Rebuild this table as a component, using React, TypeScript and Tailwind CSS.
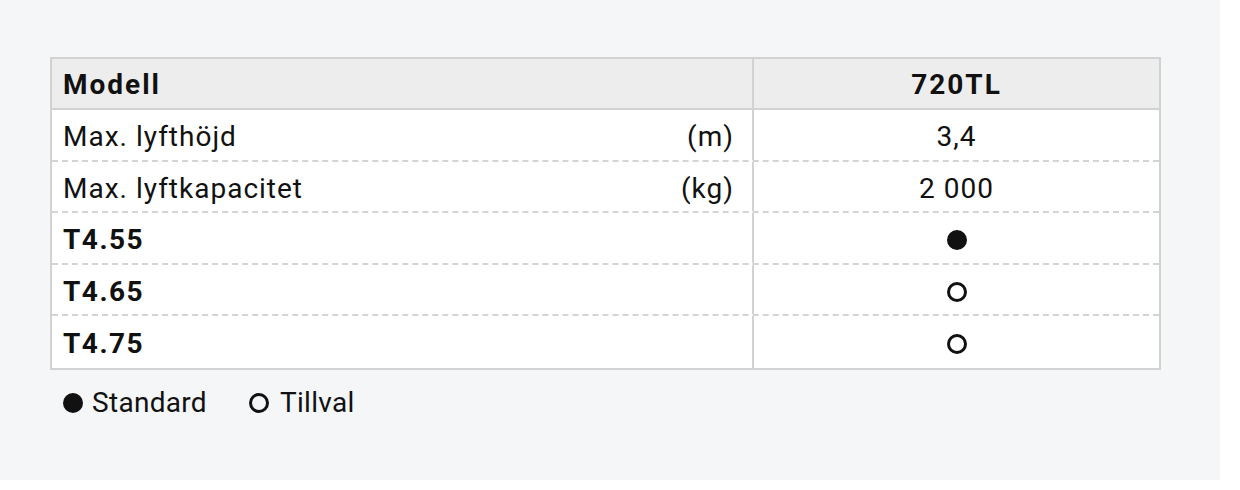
const rows = [
  { label: "Max. lyfthöjd", unit: "(m)", value: "3,4" },
  { label: "Max. lyftkapacitet", unit: "(kg)", value: "2 000" },
  { label: "T4.55", bold: true, mark: "filled" },
  { label: "T4.65", bold: true, mark: "open" },
  { label: "T4.75", bold: true, mark: "open" },
];

function Dot({ filled }: { filled: boolean }) {
  return filled ? (
    <span className="inline-block h-[20px] w-[20px] rounded-full bg-[#111]" />
  ) : (
    <span className="inline-block h-[20px] w-[20px] rounded-full border-[3px] border-[#111]" />
  );
}

export default function App() {
  return (
    <div className="h-[490px] w-[1240px] bg-white font-['Roboto',sans-serif] text-[#111]">
      <div className="h-[480px] w-[1220px] bg-[#f5f6f8] pt-[57px] pl-[50px]">
        <div className="w-[1111px] border-[2.5px] border-[#d2d2d2] bg-white">
          <div className="flex h-[51px] border-b-2 border-[#d2d2d2] bg-[#ededed] text-[28px] font-bold tracking-[2px]">
            <div className="flex w-[700px] items-center pt-[2px] pl-[11px]">Modell</div>
            <div className="flex flex-1 items-center justify-center border-l-[2.5px] border-[#d2d2d2] pt-[2px]">720TL</div>
          </div>
          {rows.map((r, i) => (
            <div
              key={r.label}
              className={
                "flex h-[51.5px] text-[28px] tracking-[1px] " +
                (i < rows.length - 1 ? "border-b-2 border-dashed border-[#d4d4d4]" : "")
              }
            >
              <div className="flex w-[700px] items-center justify-between pt-[5px] pl-[11px] pr-[18px]">
                <span className={r.bold ? "font-bold tracking-[1.5px]" : ""}>{r.label}</span>
                {r.unit && <span>{r.unit}</span>}
              </div>
              <div className="flex flex-1 items-center justify-center border-l-[2.5px] border-[#d2d2d2] pt-[5px]">
                {r.mark ? <Dot filled={r.mark === "filled"} /> : r.value}
              </div>
            </div>
          ))}
        </div>
        <div className="mt-[12px] flex items-center pl-[13px] text-[28px] tracking-[0.3px]">
          <Dot filled />
          <span className="ml-[9px]">Standard</span>
          <span className="ml-[42px] flex items-center">
            <Dot filled={false} />
          </span>
          <span className="ml-[11px]">Tillval</span>
        </div>
      </div>
    </div>
  );
}
